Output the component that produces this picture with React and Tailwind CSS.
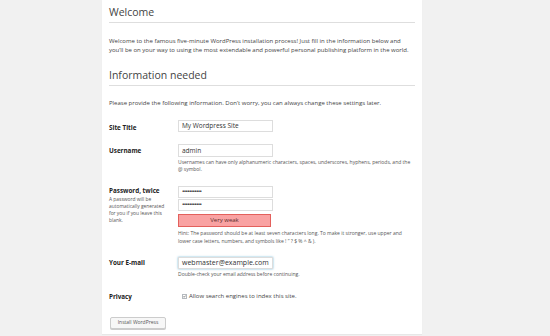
import React from 'react';

function Row({ label, children, labelClass = '', side = null }) {
	return (
		<div className="flex">
			<div className={`w-[69px] shrink-0 ${labelClass}`}>
				<div className="text-[6.3px] leading-[9px] font-bold text-[#222]">{label}</div>
				{side}
			</div>
			<div className="flex-1">{children}</div>
		</div>
	);
}

function Field({ value, className = '', textClass = 'text-[6.5px]' }) {
	return (
		<div className={`w-[95px] h-[12px] border border-[#dddddd] bg-white flex items-center px-[3px] text-[#333] ${textClass} ${className}`}>
			{value}
		</div>
	);
}

export default function App() {
	return (
		<div className="w-[550px] h-[336px] bg-[#f1f1f1] overflow-hidden font-['Open_Sans',sans-serif]">
			<div className="ml-[102px] w-[320px] h-[334px] bg-white px-[7px] text-[#444] shadow-[0_1px_1px_rgba(0,0,0,0.04)]">
				{/* Welcome */}
				<h1 className="pt-[5px] pb-[3px] text-[10.5px] leading-[14px] border-b border-[#dedede]">Welcome</h1>
				<p className="mt-[13.5px] text-[6px] leading-[9px] text-[#444]">
					Welcome to the famous five-minute WordPress installation process! Just fill in the information below and you’ll be on your way to using the most extendable and powerful personal publishing platform in the world.
				</p>

				{/* Information needed */}
				<h1 className="mt-[13.5px] pb-[3px] text-[10.5px] leading-[14px] border-b border-[#dedede]">Information needed</h1>
				<p className="mt-[12.5px] text-[6px] leading-[9px]">
					Please provide the following information. Don’t worry, you can always change these settings later.
				</p>

				<div className="mt-[12.5px]">
					<Row label="Site Title" labelClass="pt-[2.5px]">
						<Field value="My Wordpress Site" />
					</Row>
				</div>

				<div className="mt-[12px]">
					<Row label="Username" labelClass="pt-[2px]">
						<Field value="admin" className="h-[13px]" />
						<p className="mt-[1.5px] text-[5px] leading-[7px] text-[#555]">
							Usernames can have only alphanumeric characters, spaces, underscores, hyphens, periods, and the @ symbol.
						</p>
					</Row>
				</div>

				<div className="mt-[13.5px]">
					<Row
						label="Password, twice"
						side={
							<p className="mt-[1px] w-[58px] text-[4.9px] leading-[7px] text-[#555]">
								A password will be automatically generated for you if you leave this blank.
							</p>
						}
					>
						<Field value="•••••••••••" textClass="text-[6.5px] tracking-[-0.7px]" />
						<Field value="•••••••••••" className="mt-[1px]" textClass="text-[6.5px] tracking-[-0.7px]" />
						<div className="mt-[3px] w-[93px] h-[13px] bg-[#f9a2a2] border border-[#e3605c] flex items-center justify-center text-[6px] text-[#5a2b2b]">
							Very weak
						</div>
						<p className="mt-[2px] text-[5px] leading-[8px] text-[#555]">
							Hint: The password should be at least seven characters long. To make it stronger, use upper and lower case letters, numbers, and symbols like ! ” ? $ % ^ &amp; ).
						</p>
					</Row>
				</div>

				<div className="mt-[12px]">
					<Row label="Your E-mail" labelClass="pt-[1px]">
						<Field
							value="webmaster@example.com"
							className="border-[#5b9dd9] shadow-[0_0_2px_rgba(30,140,190,0.6)]"
							textClass="text-[7px]"
						/>
						<p className="mt-[1.5px] text-[5px] leading-[7px] text-[#555]">
							Double-check your email address before continuing.
						</p>
					</Row>
				</div>

				<div className="mt-[14px]">
					<Row label="Privacy">
						<div className="flex items-center h-[9px] pl-[4px] gap-[2px]">
							<span className="w-[5px] h-[5px] border border-[#b4b9be] bg-white flex items-center justify-center">
								<svg viewBox="0 0 10 10" className="w-[5px] h-[5px]">
									<path d="M1.5 5.2 L4 7.6 L8.6 2" fill="none" stroke="#333" strokeWidth="2" />
								</svg>
							</span>
							<span className="text-[6px] leading-[9px] text-[#444]">Allow search engines to index this site.</span>
						</div>
					</Row>
				</div>

				<button className="mt-[16.5px] ml-[1px] w-[56px] h-[12px] border border-[#cccccc] bg-[#f7f7f7] rounded-[2px] text-[5px] text-[#555] shadow-[0_1px_0_#ccc] flex items-center justify-center">
					Install WordPress
				</button>
			</div>
		</div>
	);
}
